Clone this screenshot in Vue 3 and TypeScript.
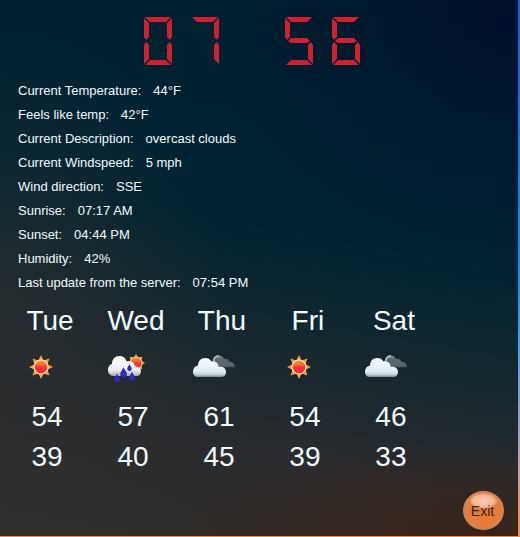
<script setup lang="ts">
type Icon = 'sun' | 'rain' | 'cloud'

interface Reading {
  label: string
  value: string
}

interface Day {
  name: string
  icon: Icon
  alt: string
  high: number
  low: number
}

const segmentShapes: Record<string, string> = {
  a: '1,0 27,0 22,5 6,5',
  b: '28,1 28,20 26,23 23,20 23,6',
  c: '26,25 28,28 28,47 23,42 23,28',
  d: '6,43 22,43 27,48 1,48',
  e: '2,25 5,28 5,42 0,47 0,28',
  f: '0,1 5,6 5,20 2,23 0,20',
  g: '6,21 22,21 25,24 22,26 6,26 3,24',
}

const litSegments: Record<string, string> = {
  '0': 'abcdef',
  '5': 'afgcd',
  '6': 'afgecd',
  '7': 'abc',
  ' ': '',
}

const time = '07 56'
const digits = time.split('').map((char) => litSegments[char].split('').map((s) => segmentShapes[s]))

const readings: Reading[] = [
  { label: 'Current Temperature:', value: '44°F' },
  { label: 'Feels like temp:', value: '42°F' },
  { label: 'Current Description:', value: 'overcast clouds' },
  { label: 'Current Windspeed:', value: '5 mph' },
  { label: 'Wind direction:', value: 'SSE' },
  { label: 'Sunrise:', value: '07:17 AM' },
  { label: 'Sunset:', value: '04:44 PM' },
  { label: 'Humidity:', value: '42%' },
  { label: 'Last update from the server:', value: '07:54 PM' },
]

const days: Day[] = [
  { name: 'Tue', icon: 'sun', alt: 'Sunny', high: 54, low: 39 },
  { name: 'Wed', icon: 'rain', alt: 'Showers', high: 57, low: 40 },
  { name: 'Thu', icon: 'cloud', alt: 'Cloudy', high: 61, low: 45 },
  { name: 'Fri', icon: 'sun', alt: 'Sunny', high: 54, low: 39 },
  { name: 'Sat', icon: 'cloud', alt: 'Cloudy', high: 46, low: 33 },
]

function rays(cx: number, cy: number, outer: number, inner: number): string {
  return Array.from({ length: 16 }, (_, i) => {
    const r = i % 2 === 0 ? outer : inner
    const angle = (i * Math.PI) / 8
    return `${(cx + r * Math.sin(angle)).toFixed(2)},${(cy - r * Math.cos(angle)).toFixed(2)}`
  }).join(' ')
}

const sunRays = rays(22, 18, 12, 7)
const smallRays = rays(31, 14, 9, 6)
</script>

<template>
  <main class="window">
    <svg class="defs" width="0" height="0" aria-hidden="true">
      <defs>
        <linearGradient id="sun-fill" x1="0" y1="0" x2="0" y2="1">
          <stop offset="0" stop-color="#e9a032" />
          <stop offset="0.35" stop-color="#f07038" />
          <stop offset="0.5" stop-color="#f83434" />
          <stop offset="1" stop-color="#fb2c30" />
        </linearGradient>
        <linearGradient id="cloud-fill" x1="0" y1="0" x2="0" y2="1">
          <stop offset="0" stop-color="#f3fbff" />
          <stop offset="0.7" stop-color="#e2edf4" />
          <stop offset="0.87" stop-color="#c3ced5" />
          <stop offset="1" stop-color="#7f8a92" />
        </linearGradient>
        <linearGradient id="dark-cloud-fill" x1="0" y1="0" x2="0" y2="1">
          <stop offset="0" stop-color="#8d979d" />
          <stop offset="0.3" stop-color="#5b666d" />
          <stop offset="0.8" stop-color="#59656d" />
          <stop offset="1" stop-color="#323e46" />
        </linearGradient>
        <linearGradient id="rain-cloud-fill" x1="0" y1="0" x2="0" y2="1">
          <stop offset="0" stop-color="#ffffff" />
          <stop offset="0.7" stop-color="#eeeff1" />
          <stop offset="1" stop-color="#a9abb0" />
        </linearGradient>
      </defs>
    </svg>

    <div class="clock" role="img" aria-label="07 56">
      <svg v-for="(digit, i) in digits" :key="i" class="digit" viewBox="0 0 28 48">
        <polygon v-for="shape in digit" :key="shape" :points="shape" />
      </svg>
    </div>

    <dl class="readings">
      <div v-for="reading in readings" :key="reading.label" class="reading">
        <dt>{{ reading.label }}</dt>
        <dd>{{ reading.value }}</dd>
      </div>
    </dl>

    <table class="forecast">
      <thead>
        <tr>
          <th v-for="day in days" :key="day.name" scope="col">{{ day.name }}</th>
        </tr>
      </thead>
      <tbody>
        <tr class="icons">
          <td v-for="day in days" :key="day.name">
            <svg class="icon" viewBox="0 0 46 36" role="img" :aria-label="day.alt">
              <g v-if="day.icon === 'sun'">
                <polygon :points="sunRays" fill="#eda535" />
                <circle cx="22" cy="18" r="7" fill="url(#sun-fill)" stroke="#fbe3d2" stroke-width="1.2" />
              </g>
              <g v-else-if="day.icon === 'rain'">
                <polygon :points="smallRays" fill="#eda535" />
                <circle cx="31" cy="14" r="6" fill="url(#sun-fill)" stroke="#fbd9a8" stroke-width="0.8" />
                <path
                  d="M9 27C5 27 3 24.500 3 21C3 18 4.500 15.500 7 15C7 10 10 7 14.500 7C18.500 7 21 9.500 21.500 12.500C25.500 11 29.500 13.500 30 17.500C33.500 17 36 19 36 22C36 25 34 27 31.500 27Z"
                  fill="url(#rain-cloud-fill)"
                />
                <g fill="#2a2dba">
                  <path d="M18.500 18C19.300 21 22 22.500 22 25A3.400 3.400 0 0 1 15.200 25C15.200 22.500 17.700 21 18.500 18Z" />
                  <path d="M24.500 15C25 17 26.800 18 26.800 19.700A2.300 2.300 0 0 1 22.200 19.700C22.200 18 24 17 24.500 15Z" />
                  <path d="M12 24.500C12.700 27 14.900 28.300 14.900 30.300A2.900 2.900 0 0 1 9.100 30.300C9.100 28.300 11.300 27 12 24.500Z" />
                  <path d="M27 22.500C27.700 25 29.900 26.500 29.900 28.500A2.900 2.900 0 0 1 24.100 28.500C24.100 26.500 26.300 25 27 22.500Z" />
                </g>
              </g>
              <g v-else>
                <path
                  d="M22 19V10C23 8 24.800 6.500 27.500 6.500C30 6.500 32 8 33 10C35.500 9 37.500 10.500 38 12.500C41 12.500 43.500 14.500 44 18.500H30Z"
                  fill="url(#dark-cloud-fill)"
                />
                <path d="M22.500 12C23 9 25 7 28 7" fill="none" stroke="#b9c2c7" stroke-width="1.600" />
                <path
                  d="M7 28C4 28 2 26 2 22.500C2 19 4 17 7 16.500C7 12 10 9 14 9C17 9 19 10 20.500 12.500C24 11.500 27.500 14 27.800 18C32 17 35 19.500 35 23C35 26 33 28 30 28Z"
                  fill="url(#cloud-fill)"
                />
              </g>
            </svg>
          </td>
        </tr>
        <tr>
          <td v-for="day in days" :key="day.name">{{ day.high }}</td>
        </tr>
        <tr>
          <td v-for="day in days" :key="day.name">{{ day.low }}</td>
        </tr>
      </tbody>
    </table>

    <footer class="actions">
      <button class="exit" type="button">Exit</button>
    </footer>
  </main>
</template>

<style>
body {
  margin: 0;
  background: linear-gradient(to bottom, #0a62dc 0%, #0c78ee 25%, #0a8cf4 50%, #48a4e8 66%, #9a9cc8 80%, #d09aa0 88%, #f08c50 96%);
}
</style>

<style scoped>
.window {
  box-sizing: border-box;
  display: flex;
  flex-direction: column;
  min-height: 100vh;
  border-right: 2px solid transparent;
  border-bottom: 1px solid #e98a4c;
  color: #f2fbff;
  font-family: 'Liberation Sans', Arial, sans-serif;
  background:
    radial-gradient(ellipse 60% 18% at 90% 100%, #38241a 0%, #38241a00 100%) padding-box,
    radial-gradient(ellipse 45% 55% at 0% 60%, #30303099 0%, #30303000 100%) padding-box,
    radial-gradient(ellipse 60% 50% at 100% 0%, #00102a 0%, #00102a00 100%) padding-box,
    linear-gradient(190deg, #00202f 0%, #002331 42%, #14272f 60%, #2a2b2e 80%, #32302d 100%) padding-box;
}

.defs {
  position: absolute;
}

.clock {
  display: flex;
  justify-content: center;
  gap: 19px;
  padding: 17px 14px 14px 0;
}

.digit {
  width: 28px;
  height: 48px;
  fill: #cf2030;
}

.readings {
  margin: 0;
  padding-left: 18px;
  font-size: 13px;
  line-height: 24px;
}

.reading {
  display: flex;
  gap: 12px;
}

.reading dd {
  margin: 0;
}

.forecast {
  width: 83%;
  margin: 6px 0 0 4px;
  border-collapse: collapse;
  table-layout: fixed;
  font-size: 28px;
  line-height: 40px;
  text-align: center;
}

.forecast th {
  padding: 0 0 0 6px;
  font-weight: normal;
}

.forecast td {
  padding: 0;
}

.forecast .icons td {
  padding: 8px 10px 12px 0;
}

.icon {
  display: block;
  width: 46px;
  height: 36px;
  margin: 0 auto;
}

.actions {
  display: flex;
  justify-content: flex-end;
  margin-top: auto;
  padding: 13px 14px 6px;
}

.exit {
  width: 41px;
  height: 39px;
  padding: 0 2px 0 0;
  border: 1px solid #c98a62;
  border-radius: 50%;
  color: #3a2418;
  font: 14px 'Liberation Sans', Arial, sans-serif;
  background:
    radial-gradient(ellipse 14px 8px at 50% 9px, #f6cdb4 0%, #f3b490 80%, #f3b49000 100%),
    radial-gradient(circle at 60% 60%, #ea7a30 0%, #e07f45 60%, #d88350 100%);
}
</style>
